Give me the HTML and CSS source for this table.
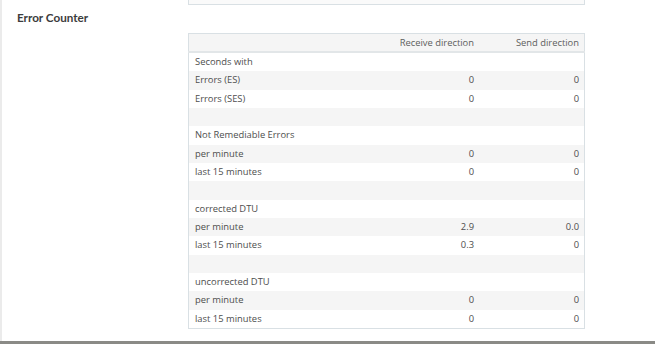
FILE: index.html
```html
<!DOCTYPE html>
<html>
<head>
<meta charset="utf-8">
<link rel="stylesheet" href="styles.css">
</head>
<body>
<div class="page">
  <div class="content">
    <div class="prev-box"></div>
    <h2 class="title">Error Counter</h2>
    <table class="counter">
      <thead>
        <tr><th class="label"></th><th>Receive direction</th><th>Send direction</th></tr>
      </thead>
      <tbody>
        <tr><td class="label">Seconds with</td><td></td><td></td></tr>
        <tr><td class="label">Errors (ES)</td><td>0</td><td>0</td></tr>
        <tr><td class="label">Errors (SES)</td><td>0</td><td>0</td></tr>
        <tr><td class="label">&nbsp;</td><td></td><td></td></tr>
        <tr><td class="label">Not Remediable Errors</td><td></td><td></td></tr>
        <tr><td class="label">per minute</td><td>0</td><td>0</td></tr>
        <tr><td class="label">last 15 minutes</td><td>0</td><td>0</td></tr>
        <tr><td class="label">&nbsp;</td><td></td><td></td></tr>
        <tr><td class="label">corrected DTU</td><td></td><td></td></tr>
        <tr><td class="label">per minute</td><td>2.9</td><td>0.0</td></tr>
        <tr><td class="label">last 15 minutes</td><td>0.3</td><td>0</td></tr>
        <tr><td class="label">&nbsp;</td><td></td><td></td></tr>
        <tr><td class="label">uncorrected DTU</td><td></td><td></td></tr>
        <tr><td class="label">per minute</td><td>0</td><td>0</td></tr>
        <tr><td class="label">last 15 minutes</td><td>0</td><td>0</td></tr>
      </tbody>
    </table>
  </div>
  <div class="footer-edge"></div>
</div>
</body>
</html>
```

FILE: styles.css
```css
html, body {
  margin: 0;
  padding: 0;
  background: #fff;
}
body {
  font-family: "Open Sans", "Lato", sans-serif;
  color: #555;
}
.page {
  width: 655px;
  height: 344px;
  display: flex;
  flex-direction: column;
}
.content {
  flex: 1;
  border-left: 2px solid #ebebeb;
}
.prev-box {
  margin-left: 186px;
  width: 395px;
  height: 4px;
  border: 1px solid #d9e0e4;
  border-top: none;
  background: #fafafa;
}
.title {
  margin: 4px 0 0 15px;
  font-family: "Lato", sans-serif;
  font-size: 11.7px;
  font-weight: 700;
  color: #3c3c3c;
  line-height: 16px;
}
.counter {
  margin: 8px 0 0 186px;
  width: 397px;
  border-collapse: collapse;
  border: 1px solid #d9e0e4;
  font-size: 9.4px;
  table-layout: fixed;
}
.counter th {
  font-weight: 400;
  color: #5e5e5e;
  background: #f5f5f5;
  height: 17px;
  line-height: 12px;
  padding: 0 5px;
  text-align: right;
  white-space: nowrap;
  border-bottom: 2px solid #e2e6e8;
}
.counter td {
  height: 18.34px;
  padding: 0 5px;
  text-align: right;
  color: #4e4e4e;
  line-height: 12px;
  white-space: nowrap;
}
.counter .label {
  text-align: left;
  padding-left: 6px;
  width: 180px;
}
.counter th:nth-child(3), .counter td:nth-child(3) {
  width: 95px;
}
.counter tbody tr:nth-child(even) td {
  background: #f5f5f5;
}
.footer-edge {
  height: 3px;
  background: #8a8a86;
}
```
